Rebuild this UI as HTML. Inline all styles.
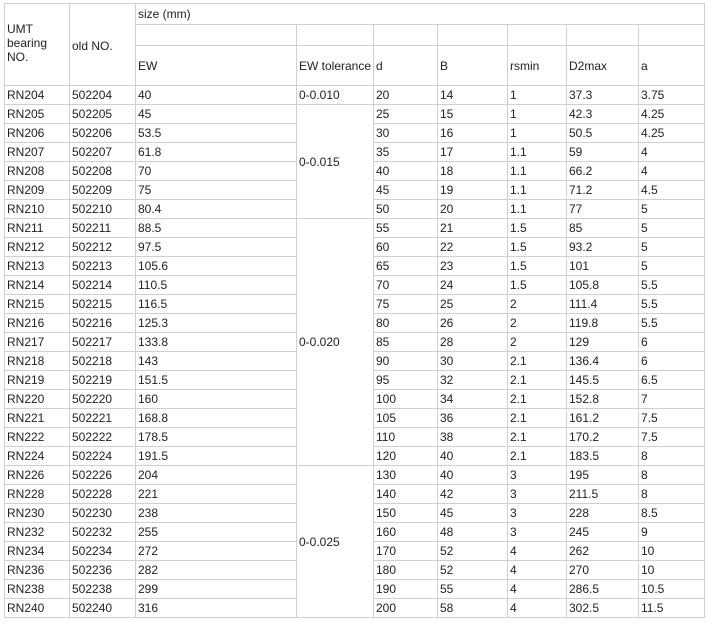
<!DOCTYPE html>
<html><head><style>
body{margin:0;background:#fff;}
table{position:absolute;left:4px;top:3px;border-collapse:collapse;table-layout:fixed;width:700px;font-family:"Liberation Sans",Arial,sans-serif;font-size:12px;color:#222;}
td{border:1px solid #d0d0d0;padding:0 0 0 2px;height:18px;line-height:14px;white-space:nowrap;overflow:hidden;vertical-align:middle;}
tr.h1 td{height:20px;vertical-align:top;padding-top:3px}
tr.h2 td{height:20px}
tr.h3 td{height:39px}
</style></head><body>
<table>
<colgroup><col style="width:65px"><col style="width:66px"><col style="width:161px"><col style="width:77px"><col style="width:64px"><col style="width:70px"><col style="width:59px"><col style="width:72px"><col style="width:66px"></colgroup>
<tr class="h1"><td rowspan="3" style="vertical-align:middle;white-space:normal;padding-bottom:6px">UMT bearing NO.</td><td rowspan="3" style="vertical-align:middle">old NO.</td><td colspan="7" style="height:17px">size (mm)</td></tr>
<tr class="h2"><td></td><td></td><td></td><td></td><td></td><td></td><td></td></tr>
<tr class="h3"><td>EW</td><td>EW tolerance</td><td>d</td><td>B</td><td>rsmin</td><td>D2max</td><td>a</td></tr>
<tr><td>RN204</td><td>502204</td><td>40</td><td>0-0.010</td><td>20</td><td>14</td><td>1</td><td>37.3</td><td>3.75</td></tr>
<tr><td>RN205</td><td>502205</td><td>45</td><td rowspan="6">0-0.015</td><td>25</td><td>15</td><td>1</td><td>42.3</td><td>4.25</td></tr>
<tr><td>RN206</td><td>502206</td><td>53.5</td><td>30</td><td>16</td><td>1</td><td>50.5</td><td>4.25</td></tr>
<tr><td>RN207</td><td>502207</td><td>61.8</td><td>35</td><td>17</td><td>1.1</td><td>59</td><td>4</td></tr>
<tr><td>RN208</td><td>502208</td><td>70</td><td>40</td><td>18</td><td>1.1</td><td>66.2</td><td>4</td></tr>
<tr><td>RN209</td><td>502209</td><td>75</td><td>45</td><td>19</td><td>1.1</td><td>71.2</td><td>4.5</td></tr>
<tr><td>RN210</td><td>502210</td><td>80.4</td><td>50</td><td>20</td><td>1.1</td><td>77</td><td>5</td></tr>
<tr><td>RN211</td><td>502211</td><td>88.5</td><td rowspan="13">0-0.020</td><td>55</td><td>21</td><td>1.5</td><td>85</td><td>5</td></tr>
<tr><td>RN212</td><td>502212</td><td>97.5</td><td>60</td><td>22</td><td>1.5</td><td>93.2</td><td>5</td></tr>
<tr><td>RN213</td><td>502213</td><td>105.6</td><td>65</td><td>23</td><td>1.5</td><td>101</td><td>5</td></tr>
<tr><td>RN214</td><td>502214</td><td>110.5</td><td>70</td><td>24</td><td>1.5</td><td>105.8</td><td>5.5</td></tr>
<tr><td>RN215</td><td>502215</td><td>116.5</td><td>75</td><td>25</td><td>2</td><td>111.4</td><td>5.5</td></tr>
<tr><td>RN216</td><td>502216</td><td>125.3</td><td>80</td><td>26</td><td>2</td><td>119.8</td><td>5.5</td></tr>
<tr><td>RN217</td><td>502217</td><td>133.8</td><td>85</td><td>28</td><td>2</td><td>129</td><td>6</td></tr>
<tr><td>RN218</td><td>502218</td><td>143</td><td>90</td><td>30</td><td>2.1</td><td>136.4</td><td>6</td></tr>
<tr><td>RN219</td><td>502219</td><td>151.5</td><td>95</td><td>32</td><td>2.1</td><td>145.5</td><td>6.5</td></tr>
<tr><td>RN220</td><td>502220</td><td>160</td><td>100</td><td>34</td><td>2.1</td><td>152.8</td><td>7</td></tr>
<tr><td>RN221</td><td>502221</td><td>168.8</td><td>105</td><td>36</td><td>2.1</td><td>161.2</td><td>7.5</td></tr>
<tr><td>RN222</td><td>502222</td><td>178.5</td><td>110</td><td>38</td><td>2.1</td><td>170.2</td><td>7.5</td></tr>
<tr><td>RN224</td><td>502224</td><td>191.5</td><td>120</td><td>40</td><td>2.1</td><td>183.5</td><td>8</td></tr>
<tr><td>RN226</td><td>502226</td><td>204</td><td rowspan="8">0-0.025</td><td>130</td><td>40</td><td>3</td><td>195</td><td>8</td></tr>
<tr><td>RN228</td><td>502228</td><td>221</td><td>140</td><td>42</td><td>3</td><td>211.5</td><td>8</td></tr>
<tr><td>RN230</td><td>502230</td><td>238</td><td>150</td><td>45</td><td>3</td><td>228</td><td>8.5</td></tr>
<tr><td>RN232</td><td>502232</td><td>255</td><td>160</td><td>48</td><td>3</td><td>245</td><td>9</td></tr>
<tr><td>RN234</td><td>502234</td><td>272</td><td>170</td><td>52</td><td>4</td><td>262</td><td>10</td></tr>
<tr><td>RN236</td><td>502236</td><td>282</td><td>180</td><td>52</td><td>4</td><td>270</td><td>10</td></tr>
<tr><td>RN238</td><td>502238</td><td>299</td><td>190</td><td>55</td><td>4</td><td>286.5</td><td>10.5</td></tr>
<tr><td>RN240</td><td>502240</td><td>316</td><td>200</td><td>58</td><td>4</td><td>302.5</td><td>11.5</td></tr>
</table>
</body></html>
